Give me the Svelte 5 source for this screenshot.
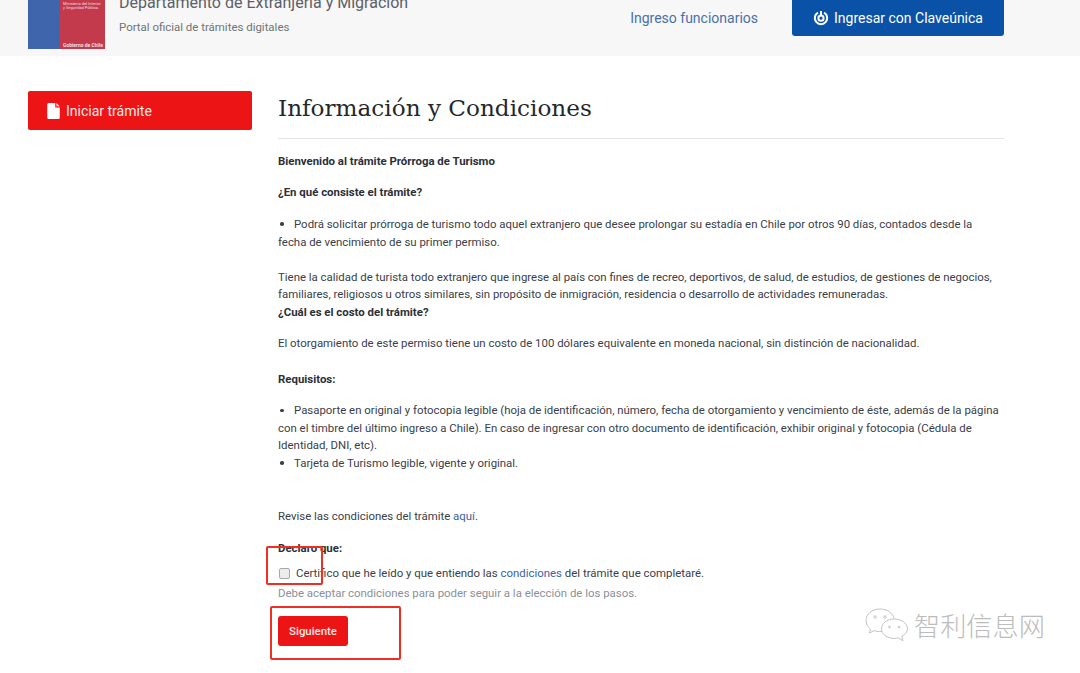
<script>
  const iconPath = "M1.500 0H8v4.500h4.500V14.500a1.500 1.500 0 0 1-1.500 1.500H1.500A1.500 1.500 0 0 1 0 14.500V1.500A1.500 1.500 0 0 1 1.500 0zM9.200 0l3.300 3.300H9.200z";
</script>

<div class="page">
  <header class="top">
    <div class="brand">
      <div class="logo">
        <div class="logo-blue"></div>
        <div class="logo-red">
          <div class="logo-min">Ministerio del Interior<br />y Seguridad Pública</div>
          <div class="logo-gob">Gobierno de Chile</div>
        </div>
      </div>
      <div class="brand-text">
        <div class="dept">Departamento de Extranjería y Migración</div>
        <div class="tag">Portal oficial de trámites digitales</div>
      </div>
    </div>
    <nav class="nav">
      <a class="staff" href="#a">Ingreso funcionarios</a>
      <a class="clave" href="#a">
        <svg width="16" height="16" viewBox="0 0 16 16" fill="none" stroke="#fff" stroke-width="2"><path d="M5 2.600a6.200 6.200 0 1 0 6 0" /><circle cx="8" cy="8.200" r="2.600" /><path d="M8 1v5" /></svg>
        Ingresar con Claveúnica
      </a>
    </nav>
  </header>

  <main class="main">
    <aside class="side">
      <a class="start" href="#a">
        <svg width="13" height="16" viewBox="0 0 12.500 16" fill="#fff"><path d={iconPath} /></svg>
        Iniciar trámite
      </a>
    </aside>
    <section class="content">
      <h1>Información y Condiciones</h1>
      <div class="body">
        <p><b>Bienvenido al trámite Prórroga de Turismo</b></p>
        <p><b>¿En qué consiste el trámite?</b></p>
        <p class="gap"><span class="dot"></span>Podrá solicitar prórroga de turismo todo aquel extranjero que desee prolongar su estadía en Chile por otros 90 días, contados desde la fecha de vencimiento de su primer permiso.</p>
        <p class="flush">Tiene la calidad de turista todo extranjero que ingrese al país con fines de recreo, deportivos, de salud, de estudios, de gestiones de negocios, familiares, religiosos u otros similares, sin propósito de inmigración, residencia o desarrollo de actividades remuneradas.<br /><b>¿Cuál es el costo del trámite?</b></p>
        <p class="gap">El otorgamiento de este permiso tiene un costo de 100 dólares equivalente en moneda nacional, sin distinción de nacionalidad.</p>
        <p><b>Requisitos:</b></p>
        <p class="gap"><span class="dot"></span>Pasaporte en original y fotocopia legible (hoja de identificación, número, fecha de otorgamiento y vencimiento de éste, además de la página con el timbre del último ingreso a Chile). En caso de ingresar con otro documento de identificación, exhibir original y fotocopia (Cédula de Identidad, DNI, etc).<br /><span class="dot"></span>Tarjeta de Turismo legible, vigente y original.</p>
        <p class="revise">Revise las condiciones del trámite <a href="#a">aquí</a>.</p>
        <p class="declare"><b>Declaro que:</b></p>
        <label class="check"><input type="checkbox" /> <span>Certifico que he leído y que entiendo las <a href="#a">condiciones</a> del trámite que completaré.</span></label>
        <div class="muted">Debe aceptar condiciones para poder seguir a la elección de los pasos.</div>
        <button class="next">Siguiente</button>
      </div>
    </section>
  </main>

  <div class="mark mark-a"></div>
  <div class="mark mark-b"></div>

  <div class="wm">
    <svg width="44" height="36" viewBox="0 0 44 36" fill="#fff" stroke="#c4c4c4" stroke-width="1">
      <path d="M15 2C7 2 1 7 1 13.500c0 3.500 1.800 6.500 4.500 8.500l-1 4 4.500-2.400c1.800.6 3.700 1 5.500 1 1 0 2.200-.1 3.300-.3" />
      <path d="M15 2c7 0 12.800 4 14 9.500" />
      <path d="M29 12c-7 0-12.500 4.300-12.500 9.700S22 31.400 29 31.400c1.500 0 3-.2 4.300-.6l4.700 3-1.200-4.500c3.400-1.800 5.700-4.500 5.700-7.600C42.500 16.300 36 12 29 12z" />
      <circle cx="10" cy="10" r="1.200" /><circle cx="20" cy="10" r="1.200" /><circle cx="24.500" cy="20" r=".9" /><circle cx="34" cy="20" r=".9" />
    </svg>
    <span>智利信息网</span>
  </div>
</div>

<style>
  :global(body) {
    margin: 0;
    background: #fff;
  }
  .page {
    position: relative;
    width: 1080px;
    height: 673px;
    overflow: hidden;
    font-family: Roboto, "Liberation Sans", sans-serif;
    color: #3a404a;
  }
  a {
    text-decoration: none;
  }
  .top {
    height: 56px;
    background: #f7f7f7;
    padding: 0 76px 0 28px;
    display: flex;
    justify-content: space-between;
    align-items: flex-start;
    box-sizing: border-box;
  }
  .brand {
    display: flex;
    gap: 14px;
    height: 49px;
    align-items: flex-end;
  }
  .logo {
    width: 77px;
    height: 49px;
    display: flex;
  }
  .logo-blue {
    width: 32px;
    background: #3f66ad;
  }
  .logo-red {
    flex: 1;
    background: #c23a4b;
    color: #f4dfe2;
    font-size: 4px;
    line-height: 4px;
    display: flex;
    flex-direction: column;
    justify-content: space-between;
    padding: 2px 2px 2px 3px;
    white-space: nowrap;
  }
  .logo-gob {
    font-weight: 700;
    font-size: 5px;
  }
  .brand-text {
    align-self: flex-start;
    margin-top: -7px;
  }
  .dept {
    font-size: 16px;
    line-height: 20px;
    color: #5b6068;
    white-space: nowrap;
  }
  .tag {
    font-size: 11.450px;
    line-height: 14px;
    color: #6f747a;
    margin-top: 7px;
  }
  .nav {
    display: flex;
    align-items: center;
    gap: 34px;
    height: 36px;
  }
  .staff {
    color: #4a70ab;
    font-size: 14px;
  }
  .clave {
    display: flex;
    align-items: center;
    gap: 5px;
    width: 212px;
    height: 36px;
    box-sizing: border-box;
    justify-content: center;
    background: #0a52a8;
    color: #fff;
    font-size: 14px;
    border-radius: 0 0 3px 3px;
  }
  .main {
    display: flex;
    padding: 35px 76px 0 28px;
  }
  .side {
    width: 224px;
    flex: none;
    margin-right: 26px;
  }
  .start {
    display: flex;
    align-items: center;
    gap: 6px;
    height: 39px;
    padding-left: 19px;
    box-sizing: border-box;
    background: #ec1414;
    color: #f8eaea;
    font-size: 14px;
    border-radius: 2px;
  }
  .content {
    flex: 1;
    min-width: 0;
  }
  h1 {
    margin: 0;
    font-family: "DejaVu Serif", serif;
    font-weight: 400;
    font-size: 23.150px;
    line-height: 34px;
    color: #24272c;
    padding-bottom: 13px;
    border-bottom: 1px solid #e4e4e4;
  }
  .body {
    font-size: 11.410px;
    line-height: 17.600px;
    padding: 13.800px 3px 0 0;
  }
  p {
    margin: 0 0 14px;
  }
  b {
    font-weight: 700;
    color: #2b303a;
  }
  .dot {
    display: inline-block;
    width: 3.500px;
    height: 3.500px;
    border-radius: 50%;
    background: #3a404a;
    margin: 0 10.500px 2px 2px;
  }
  .gap {
    margin-bottom: 17.500px;
  }
  .flush {
    margin-bottom: 14px;
  }
  .body a {
    color: #3a62a5;
  }
  .revise {
    margin-top: 35px;
  }
  .declare {
    margin-bottom: 0;
    padding-top: .4px;
  }
  .check {
    display: flex;
    align-items: center;
    gap: 6px;
    margin-top: 7.500px;
  }
  .check input {
    appearance: none;
    margin: 0 0 0 1px;
    width: 11px;
    height: 11px;
    flex: none;
    background: #ececec;
    border: 1px solid #a8a8a8;
    border-radius: 2px;
    box-sizing: border-box;
  }
  .muted {
    color: #8a9099;
    margin-top: 3px;
  }
  .next {
    display: block;
    margin-top: 13px;
    width: 70px;
    height: 30px;
    border: 0;
    border-radius: 3px;
    background: #ec1414;
    color: #f8eaea;
    font: 500 11.400px Roboto, sans-serif;
  }
  .mark {
    position: absolute;
    border: 2px solid #ee2f24;
    border-radius: 2px;
    box-sizing: border-box;
  }
  .mark-a {
    left: 266px;
    top: 546px;
    width: 57px;
    height: 39px;
  }
  .mark-b {
    left: 270px;
    top: 606px;
    width: 131px;
    height: 54px;
  }
  .wm {
    position: absolute;
    left: 865px;
    top: 607px;
    display: flex;
    align-items: center;
    gap: 5px;
    color: #bcbcbc;
  }
  .wm span {
    font-family: "Noto Sans CJK SC", sans-serif;
    font-weight: 300;
    font-size: 26.200px;
    line-height: 36px;
  }
</style>
